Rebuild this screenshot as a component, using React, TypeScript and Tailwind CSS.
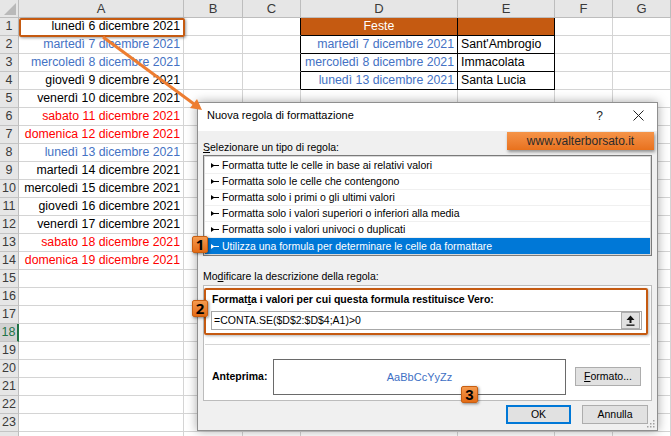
import React from "react";

const BLUE = "#4472c4";
const RED = "#ff0000";
const BLACK = "#000000";

const colA: [string, string][] = [
  ["lunedì 6 dicembre 2021", BLACK],
  ["martedì 7 dicembre 2021", BLUE],
  ["mercoledì 8 dicembre 2021", BLUE],
  ["giovedì 9 dicembre 2021", BLACK],
  ["venerdì 10 dicembre 2021", BLACK],
  ["sabato 11 dicembre 2021", RED],
  ["domenica 12 dicembre 2021", RED],
  ["lunedì 13 dicembre 2021", BLUE],
  ["martedì 14 dicembre 2021", BLACK],
  ["mercoledì 15 dicembre 2021", BLACK],
  ["giovedì 16 dicembre 2021", BLACK],
  ["venerdì 17 dicembre 2021", BLACK],
  ["sabato 18 dicembre 2021", RED],
  ["domenica 19 dicembre 2021", RED],
];

const feste: [string, string][] = [
  ["martedì 7 dicembre 2021", "Sant'Ambrogio"],
  ["mercoledì 8 dicembre 2021", "Immacolata"],
  ["lunedì 13 dicembre 2021", "Santa Lucia"],
];

const rules = [
  "Formatta tutte le celle in base ai relativi valori",
  "Formatta solo le celle che contengono",
  "Formatta solo i primi o gli ultimi valori",
  "Formatta solo i valori superiori o inferiori alla media",
  "Formatta solo i valori univoci o duplicati",
  "Utilizza una formula per determinare le celle da formattare",
];

const cell =
  "h-[18px] border-r border-b border-[#d4d4d4] overflow-hidden whitespace-nowrap leading-[17px] text-[12.3px]";

function Badge({ n, className }: { n: string; className: string }) {
  return (
    <div
      className={`absolute flex items-center justify-center rounded-[2px] border border-[#c75e12] bg-gradient-to-b from-[#f59a4c] to-[#e36b12] text-[15px] font-bold leading-none text-black shadow-[1px_1px_3px_rgba(0,0,0,0.45)] ${className}`}
    >
      {n}
    </div>
  );
}

function RuleArrow({ white }: { white?: boolean }) {
  return (
    <svg width="8" height="7" viewBox="0 0 8 7" className="shrink-0">
      <path d="M0 1 L0 6 L3.5 3.5 Z" fill={white ? "#fff" : "#000"} />
      <rect x="2" y="3" width="6" height="1" fill={white ? "#fff" : "#000"} />
    </svg>
  );
}

function Sheet() {
  const rows = Array.from({ length: 24 }, (_, i) => i + 1);
  return (
    <div className="grid grid-cols-[19px_165px_59px_58px_157px_97px_58px_58px] font-['Liberation_Sans',Arial,sans-serif]">
      {/* header row */}
      <div className="relative h-[18px] border-r border-b border-[#bdbdbd] bg-[#e6e6e6]">
        <svg width="12" height="12" viewBox="0 0 12 12" className="absolute right-[2px] bottom-[2px]">
          <path d="M12 0 L12 12 L0 12 Z" fill="#b9b9b9" />
        </svg>
      </div>
      {["A", "B", "C", "D", "E", "F", "G"].map((c) => (
        <div
          key={c}
          className="flex h-[18px] items-center justify-center border-r border-b border-[#bdbdbd] bg-[#e6e6e6] text-[13px] text-[#3a3a3a]"
        >
          {c}
        </div>
      ))}

      {rows.map((r) => {
        const a = colA[r - 1];
        const inTable = r <= 4;
        const sel = r === 18;
        return (
          <React.Fragment key={r}>
            <div
              className={`flex h-[18px] items-center justify-center border-b border-[#c4c4c4] text-[12.5px] ${
                sel
                  ? "border-r-2 border-r-[#217346] bg-[#d2d2d2] text-[#217346]"
                  : "border-r border-r-[#bdbdbd] bg-[#e6e6e6] text-[#3a3a3a]"
              }`}
            >
              {r < 24 ? r : ""}
            </div>
            <div className={`${cell} pr-[3px] text-right`} style={{ color: a ? a[1] : undefined }}>
              {a ? a[0] : ""}
            </div>
            <div className={cell} />
            <div className={`${cell} ${inTable ? "border-r-black" : ""}`} />
            {r === 1 ? (
              <>
                <div className="h-[18px] border-r border-b border-black bg-[#c55a11] text-center text-[12.3px] leading-[17px] text-white">
                  Feste
                </div>
                <div className="h-[18px] border-r border-b border-black bg-[#c55a11]" />
              </>
            ) : inTable ? (
              <>
                <div className={`${cell} border-black pr-[3px] text-right text-[#4472c4]`}>
                  {feste[r - 2][0]}
                </div>
                <div className={`${cell} border-black pl-[3px] text-black`}>{feste[r - 2][1]}</div>
              </>
            ) : (
              <>
                <div className={cell} />
                <div className={cell} />
              </>
            )}
            <div className={cell} />
            <div className={cell} />
          </React.Fragment>
        );
      })}
    </div>
  );
}

function Dialog() {
  return (
    <div className="absolute left-[197px] top-[102px] flex h-[329px] w-[461px] flex-col border border-[#8f8f8f] bg-[#f0f0f0] font-['Liberation_Sans',Arial,sans-serif] text-[10.5px] text-black shadow-[0_0_10px_rgba(0,0,0,0.35)]">
      {/* title bar */}
      <div className="flex h-[28px] items-center bg-white pb-[3px] pl-[9px] pr-[13px]">
        <span className="text-[11px]">Nuova regola di formattazione</span>
        <span className="ml-auto mr-[30px] text-[12px] text-[#222]">?</span>
        <svg width="11" height="11" viewBox="0 0 11 11">
          <path d="M0.5 0.5 L10.5 10.5 M10.5 0.5 L0.5 10.5" stroke="#222" strokeWidth="1" />
        </svg>
      </div>

      <div className="flex flex-col px-[5px]">
        <div className="mt-[9px] h-[14px] leading-[14px]">
          <span className="underline">S</span>elezionare un tipo di regola:
        </div>

        <div className="mt-px h-[101px] border border-[#7a7a7a] bg-white px-px pt-[2px] shadow-[inset_0_0_0_1px_#d8d8d8]">
          {rules.map((t, i) => {
            const active = i === rules.length - 1;
            return (
              <div
                key={t}
                className={`flex h-[16px] items-center gap-[3px] pl-[6px] ${
                  active ? "bg-[#0078d7] text-white" : "border-b border-[#f0f0f0]"
                }`}
              >
                <RuleArrow white={active} />
                <span className="leading-[15px]">{t}</span>
              </div>
            );
          })}
        </div>

        <div className="mt-[13px] h-[14px] leading-[14px]">
          Mo<span className="underline">d</span>ificare la descrizione della regola:
        </div>

        <div className="mt-[2px] flex h-[116px] flex-col border border-[#bcbcbc] bg-white">
          <div className="flex h-[58px] flex-col pl-[7px] pr-[9px] pt-[7px]">
            <div className="ml-px h-[13px] font-bold leading-[13px]">
              Format<span className="underline">t</span>a i valori per cui questa formula restituisce Vero:
            </div>
            <div className="mt-[5px] flex h-[19px] items-center border border-[#a8a8a8] bg-white pl-[2px] pr-px">
              <span>=CONTA.SE($D$2:$D$4;A1)&gt;0</span>
              <div className="ml-auto flex h-[17px] w-[19px] items-center justify-center border border-[#adadad] bg-[#e1e1e1]">
                <svg width="9" height="11" viewBox="0 0 9 11">
                  <path d="M4.5 0.5 L8.5 5 L5.5 5 L5.5 8 L3.5 8 L3.5 5 L0.5 5 Z" fill="#111" />
                  <rect x="0.5" y="9.5" width="8" height="1.3" fill="#111" />
                </svg>
              </div>
            </div>
          </div>
          <div className="mx-px border-t border-[#d5d5d5]" />
          <div className="flex items-start pl-[8px] pt-[14px]">
            <div className="mt-[10px] w-[61px] font-bold leading-[14px]">Anteprima:</div>
            <div className="flex h-[36px] w-[293px] items-center justify-center border border-[#6a6a6a] bg-white text-[11px] text-[#3d6fc4]">
              AaBbCcYyZz
            </div>
            <div className="ml-[9px] mt-[8px] flex h-[19px] w-[66px] items-center justify-center border border-[#adadad] bg-[#e1e1e1]">
              <span>
                <span className="underline">F</span>ormato...
              </span>
            </div>
          </div>
        </div>

        <div className="mt-[4px] flex justify-end gap-[11px] pr-[4px]">
          <div className="flex h-[19px] w-[65px] items-center justify-center border border-[#0078d7] bg-[#e1e1e1] shadow-[inset_0_0_0_1px_#0078d7]">
            OK
          </div>
          <div className="flex h-[19px] w-[66px] items-center justify-center border border-[#adadad] bg-[#e1e1e1]">
            Annulla
          </div>
        </div>
      </div>

      {/* grip */}
      <svg width="9" height="9" viewBox="0 0 9 9" className="absolute right-[2px] bottom-[2px]">
        {[
          [7, 1],
          [7, 4],
          [4, 4],
          [7, 7],
          [4, 7],
          [1, 7],
        ].map(([x, y]) => (
          <rect key={`${x}-${y}`} x={x} y={y} width="1.5" height="1.5" fill="#a0a0a0" />
        ))}
      </svg>

      {/* annotations */}
      <div className="absolute left-[309px] top-[29px] flex h-[18px] w-[147px] items-center justify-center bg-gradient-to-b from-[#f59448] to-[#e8711c] text-[12px] text-[#2a2a2a] shadow-[1px_2px_3px_rgba(0,0,0,0.4)]">
        www.valterborsato.it
      </div>
      <div className="absolute left-[6px] top-[185px] h-[47px] w-[444px] rounded-[2px] border-2 border-[#c55a11] shadow-[1px_1px_3px_rgba(0,0,0,0.3)]" />
      <Badge n="3" className="left-[263px] top-[283px] h-[17px] w-[17px]" />
    </div>
  );
}

export default function App() {
  return (
    <div className="relative h-[436px] w-[671px] overflow-hidden bg-white">
      <Sheet />

      <div className="absolute left-[19px] top-[18px] h-[19px] w-[166px] rounded-[2px] border-2 border-[#c55a11] shadow-[1px_1px_3px_rgba(0,0,0,0.4)]" />

      <Dialog />

      <svg
        width="671"
        height="436"
        viewBox="0 0 671 436"
        className="pointer-events-none absolute left-0 top-0"
      >
        <line x1="103" y1="37" x2="194" y2="104" stroke="#ed7d31" strokeWidth="3" />
        <path d="M202 110 L190 108 L197 99 Z" fill="#ed7d31" />
      </svg>

      <Badge n="1" className="left-[192px] top-[236px] h-[17px] w-[16px]" />
      <Badge n="2" className="left-[192px] top-[300px] h-[17px] w-[16px]" />
    </div>
  );
}
